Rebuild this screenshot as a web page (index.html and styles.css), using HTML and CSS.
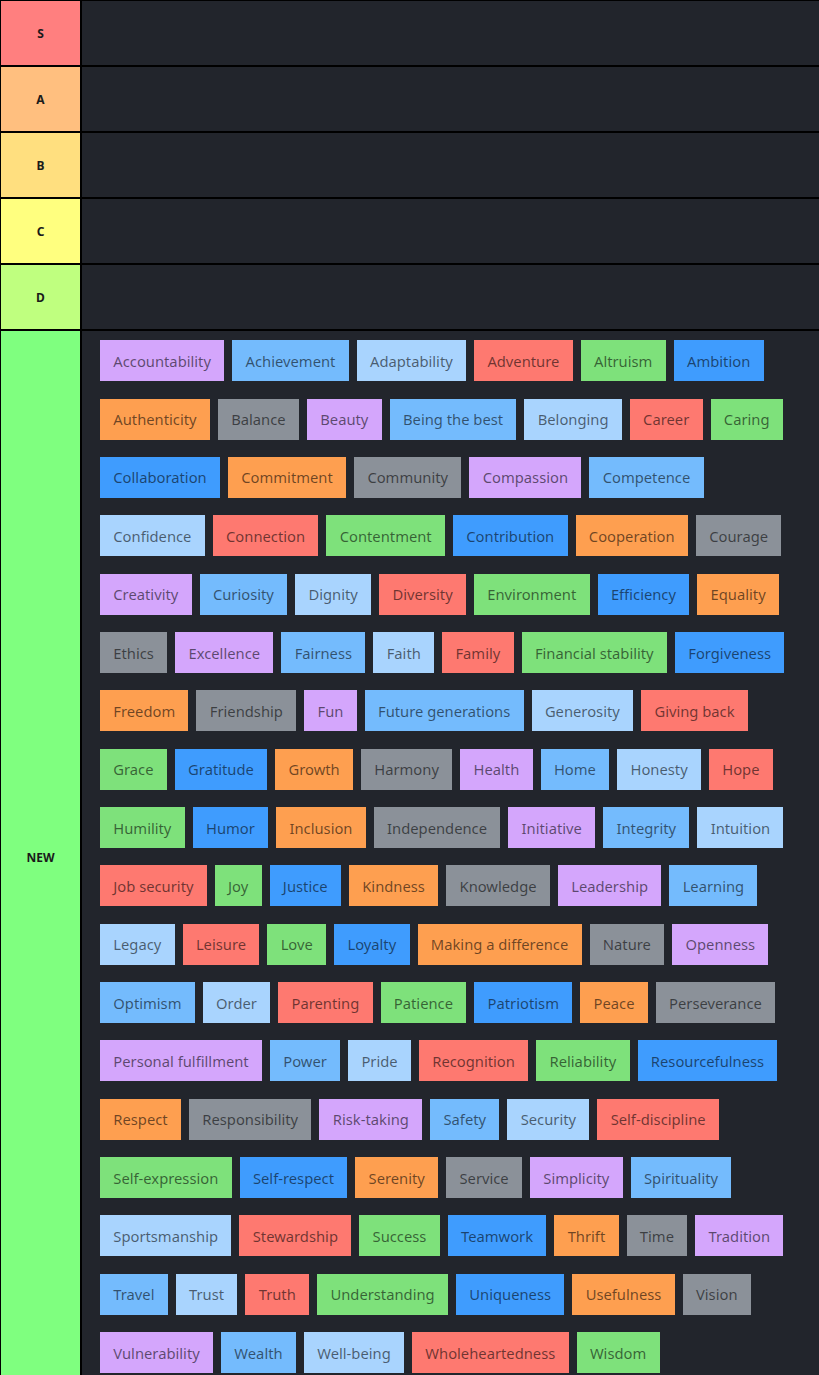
FILE: index.html
```
<!DOCTYPE html>
<html lang="en">
<head>
<meta charset="utf-8">
<title>Values Tier List</title>
<link rel="stylesheet" href="styles.css">
</head>
<body>
<div class="tier-list">
  <div class="tier"><div class="label s">S</div><div class="items"></div></div>
  <div class="tier"><div class="label a">A</div><div class="items"></div></div>
  <div class="tier"><div class="label b">B</div><div class="items"></div></div>
  <div class="tier"><div class="label c">C</div><div class="items"></div></div>
  <div class="tier"><div class="label d">D</div><div class="items"></div></div>
  <div class="tier"><div class="label new">NEW</div>
    <div class="items pool">
      <span class="tag pu">Accountability</span>
      <span class="tag lb">Achievement</span>
      <span class="tag pb">Adaptability</span>
      <span class="tag rd">Adventure</span>
      <span class="tag gn">Altruism</span>
      <span class="tag bl">Ambition</span>
      <span class="tag or">Authenticity</span>
      <span class="tag gy">Balance</span>
      <span class="tag pu">Beauty</span>
      <span class="tag lb">Being the best</span>
      <span class="tag pb">Belonging</span>
      <span class="tag rd">Career</span>
      <span class="tag gn">Caring</span>
      <span class="tag bl">Collaboration</span>
      <span class="tag or">Commitment</span>
      <span class="tag gy">Community</span>
      <span class="tag pu">Compassion</span>
      <span class="tag lb">Competence</span>
      <span class="tag pb">Confidence</span>
      <span class="tag rd">Connection</span>
      <span class="tag gn">Contentment</span>
      <span class="tag bl">Contribution</span>
      <span class="tag or">Cooperation</span>
      <span class="tag gy">Courage</span>
      <span class="tag pu">Creativity</span>
      <span class="tag lb">Curiosity</span>
      <span class="tag pb">Dignity</span>
      <span class="tag rd">Diversity</span>
      <span class="tag gn">Environment</span>
      <span class="tag bl">Efficiency</span>
      <span class="tag or">Equality</span>
      <span class="tag gy">Ethics</span>
      <span class="tag pu">Excellence</span>
      <span class="tag lb">Fairness</span>
      <span class="tag pb">Faith</span>
      <span class="tag rd">Family</span>
      <span class="tag gn">Financial stability</span>
      <span class="tag bl">Forgiveness</span>
      <span class="tag or">Freedom</span>
      <span class="tag gy">Friendship</span>
      <span class="tag pu">Fun</span>
      <span class="tag lb">Future generations</span>
      <span class="tag pb">Generosity</span>
      <span class="tag rd">Giving back</span>
      <span class="tag gn">Grace</span>
      <span class="tag bl">Gratitude</span>
      <span class="tag or">Growth</span>
      <span class="tag gy">Harmony</span>
      <span class="tag pu">Health</span>
      <span class="tag lb">Home</span>
      <span class="tag pb">Honesty</span>
      <span class="tag rd">Hope</span>
      <span class="tag gn">Humility</span>
      <span class="tag bl">Humor</span>
      <span class="tag or">Inclusion</span>
      <span class="tag gy">Independence</span>
      <span class="tag pu">Initiative</span>
      <span class="tag lb">Integrity</span>
      <span class="tag pb">Intuition</span>
      <span class="tag rd">Job security</span>
      <span class="tag gn">Joy</span>
      <span class="tag bl">Justice</span>
      <span class="tag or">Kindness</span>
      <span class="tag gy">Knowledge</span>
      <span class="tag pu">Leadership</span>
      <span class="tag lb">Learning</span>
      <span class="tag pb">Legacy</span>
      <span class="tag rd">Leisure</span>
      <span class="tag gn">Love</span>
      <span class="tag bl">Loyalty</span>
      <span class="tag or">Making a difference</span>
      <span class="tag gy">Nature</span>
      <span class="tag pu">Openness</span>
      <span class="tag lb">Optimism</span>
      <span class="tag pb">Order</span>
      <span class="tag rd">Parenting</span>
      <span class="tag gn">Patience</span>
      <span class="tag bl">Patriotism</span>
      <span class="tag or">Peace</span>
      <span class="tag gy">Perseverance</span>
      <span class="tag pu">Personal fulfillment</span>
      <span class="tag lb">Power</span>
      <span class="tag pb">Pride</span>
      <span class="tag rd">Recognition</span>
      <span class="tag gn">Reliability</span>
      <span class="tag bl">Resourcefulness</span>
      <span class="tag or">Respect</span>
      <span class="tag gy">Responsibility</span>
      <span class="tag pu">Risk-taking</span>
      <span class="tag lb">Safety</span>
      <span class="tag pb">Security</span>
      <span class="tag rd">Self-discipline</span>
      <span class="tag gn">Self-expression</span>
      <span class="tag bl">Self-respect</span>
      <span class="tag or">Serenity</span>
      <span class="tag gy">Service</span>
      <span class="tag pu">Simplicity</span>
      <span class="tag lb">Spirituality</span>
      <span class="tag pb">Sportsmanship</span>
      <span class="tag rd">Stewardship</span>
      <span class="tag gn">Success</span>
      <span class="tag bl">Teamwork</span>
      <span class="tag or">Thrift</span>
      <span class="tag gy">Time</span>
      <span class="tag pu">Tradition</span>
      <span class="tag lb">Travel</span>
      <span class="tag pb">Trust</span>
      <span class="tag rd">Truth</span>
      <span class="tag gn">Understanding</span>
      <span class="tag bl">Uniqueness</span>
      <span class="tag or">Usefulness</span>
      <span class="tag gy">Vision</span>
      <span class="tag pu">Vulnerability</span>
      <span class="tag lb">Wealth</span>
      <span class="tag pb">Well-being</span>
      <span class="tag rd">Wholeheartedness</span>
      <span class="tag gn">Wisdom</span>
    </div>
  </div>
</div>
</body>
</html>
```
FILE: styles.css
```
html, body {
  margin: 0;
  padding: 0;
  background: #000;
}

body {
  font-family: "Noto Sans", "Open Sans", sans-serif;
}

.tier-list {
  display: flex;
  flex-direction: column;
  gap: 2px;
  padding: 1px 0 0 1px;
}

.tier {
  display: flex;
  gap: 2px;
  min-height: 64px;
}

.label {
  width: 79px;
  flex: 0 0 79px;
  display: flex;
  align-items: center;
  justify-content: center;
  font-size: 12px;
  font-weight: 700;
  color: #1a1a1a;
}

.label.s { background: #ff7f7f; }
.label.a { background: #ffbf7f; }
.label.b { background: #ffdf7f; }
.label.c { background: #ffff7f; }
.label.d { background: #bfff7f; }
.label.new { background: #7fff7f; }

.items {
  flex: 1;
  background: #22252c;
}

.pool {
  display: flex;
  flex-wrap: wrap;
  align-content: flex-start;
  gap: 17.35px 8px;
  padding: 9.3px 18px 10px 18px;
}

.tag {
  height: 41px;
  box-sizing: border-box;
  display: flex;
  align-items: center;
  padding: 0 13.3px;
  font-size: 14.75px;
  color: rgba(0, 0, 0, 0.57);
  white-space: nowrap;
}

.tag.pu { background: #d4a6fc; }
.tag.lb { background: #74bbfd; }
.tag.pb { background: #a9d4fe; }
.tag.rd { background: #fe7970; }
.tag.gn { background: #7ee17b; }
.tag.bl { background: #3f9cfe; }
.tag.or { background: #fe9f50; }
.tag.gy { background: #8b9199; }
```
